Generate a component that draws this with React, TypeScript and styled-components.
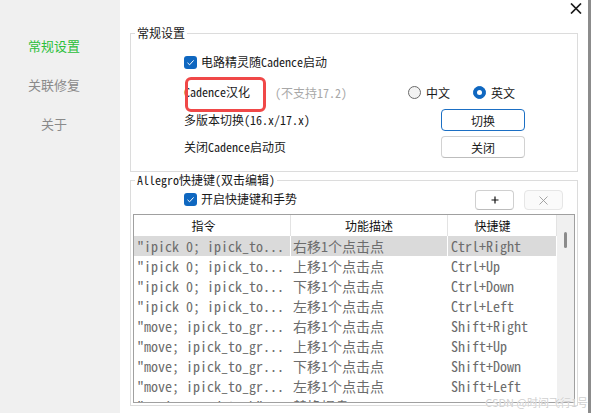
import React from 'react';
import styled, { createGlobalStyle } from 'styled-components';

const SIM = `"Noto Sans Mono CJK SC", "Liberation Mono", "Noto Sans CJK SC", monospace`;
const UI = `"Noto Sans CJK SC", "Noto Sans", sans-serif`;

const GlobalStyle = createGlobalStyle`
  html, body { margin: 0; padding: 0; background: #fff; }
  body { font-family: ${UI}; color: #1a1a1a; }
  * { box-sizing: border-box; }
`;

const Window = styled.div`
  position: relative;
  display: flex;
  width: 592px;
  height: 413px;
  overflow: hidden;
`;

const Sidebar = styled.nav`
  width: 120px;
  flex: none;
  background: #f0f0f0;
  padding: 26px 12px 0 0;
  display: flex;
  flex-direction: column;
`;

const NavItem = styled.div<{ $active?: boolean }>`
  height: 39px;
  line-height: 39px;
  text-align: center;
  font-size: 13px;
  color: ${(p) => (p.$active ? '#2bbf3a' : '#8a8a8a')};
`;

const Main = styled.main`
  flex: 1;
  display: flex;
  flex-direction: column;
  padding: 0 10px;
  border-right: 3px solid #8c8c8c;
  margin-right: 1px;
  background: #fff;
`;

const TitleBar = styled.div`
  height: 25px;
  display: flex;
  justify-content: flex-end;
  align-items: flex-start;
  padding-top: 3px;
  margin-right: -4px;
`;

const CloseButton = styled.div`
  width: 12px;
  height: 11px;
  display: flex;
`;

const Group = styled.fieldset`
  margin: 0;
  padding: 0;
  min-width: 0;
  border: 1px solid #dcdcdc;
`;

const Legend = styled.legend`
  margin-left: 4px;
  padding: 0 2px;
  font-family: ${SIM};
  font-size: 12px;
  line-height: 16px;
  color: #1a1a1a;
`;

const GeneralBody = styled.div`
  display: flex;
  flex-direction: column;
  padding: 10px 52px 13px 53px;
`;

const Row = styled.div<{ $mt?: number; $spread?: boolean }>`
  display: flex;
  align-items: center;
  height: 22px;
  margin-top: ${(p) => p.$mt ?? 0}px;
  justify-content: ${(p) => (p.$spread ? 'space-between' : 'flex-start')};
`;

const Label = styled.span<{ $ml?: number }>`
  font-family: ${SIM};
  font-size: 12px;
  line-height: 22px;
  white-space: nowrap;
  color: #1a1a1a;
  margin-left: ${(p) => p.$ml ?? 0}px;
`;

const MarkedLabel = styled(Label)`
  position: relative;
  display: block;
  width: 76px;
  &::after {
    content: '';
    position: absolute;
    left: 1px;
    top: -4px;
    width: 75px;
    height: 29px;
    border: 3px solid #f04848;
    border-radius: 6px;
  }
`;

const Note = styled.span`
  font-family: ${SIM};
  font-size: 12px;
  color: #a8a8a8;
  margin-left: 15px;
  width: 133px;
  white-space: nowrap;
`;

const RadioGroup = styled.div`
  display: flex;
  align-items: center;
  gap: 23px;
`;

const RadioItem = styled.label`
  display: flex;
  align-items: center;
  gap: 5px;
  font-size: 12px;
  color: #1a1a1a;
`;

const RadioCircle = styled.span<{ $on?: boolean }>`
  width: 13px;
  height: 13px;
  border-radius: 50%;
  display: flex;
  align-items: center;
  justify-content: center;
  background: ${(p) => (p.$on ? '#0f67c0' : '#f3f3f3')};
  border: 1px solid ${(p) => (p.$on ? '#0f67c0' : '#6a6a6a')};
  &::after {
    content: '';
    display: ${(p) => (p.$on ? 'block' : 'none')};
    width: 5px;
    height: 5px;
    border-radius: 50%;
    background: #fff;
  }
`;

const CheckBox = styled.span`
  width: 13px;
  height: 13px;
  border-radius: 3px;
  background: #0f67c0;
  display: flex;
  align-items: center;
  justify-content: center;
  flex: none;
`;

const Button = styled.button<{ $primary?: boolean }>`
  width: 84px;
  height: 22px;
  padding: 0;
  font-family: ${UI};
  font-size: 12px;
  color: #1a1a1a;
  background: #fff;
  border: 1px solid ${(p) => (p.$primary ? '#1b6fc4' : '#d2d2d2')};
  border-bottom-color: ${(p) => (p.$primary ? '#1b6fc4' : '#bdbdbd')};
  border-radius: 4px;
`;

const ShortcutBody = styled.div`
  display: flex;
  flex-direction: column;
  padding: 0 2px 2px 2px;
`;

const ToolRow = styled.div`
  display: flex;
  align-items: center;
  height: 22px;
  padding: 0 12px 0 51px;
`;

const ToolButtons = styled.div`
  margin-left: auto;
  display: flex;
  gap: 10px;
  padding-top: 2px;
`;

const SmallButton = styled.button<{ $disabled?: boolean }>`
  width: 39px;
  height: 20px;
  padding: 0;
  display: flex;
  align-items: center;
  justify-content: center;
  border-radius: 4px;
  background: ${(p) => (p.$disabled ? '#fafafa' : '#fff')};
  border: 1px solid ${(p) => (p.$disabled ? '#e6e6e6' : '#d0d0d0')};
  border-bottom-color: ${(p) => (p.$disabled ? '#e6e6e6' : '#bcbcbc')};
`;

const Table = styled.div`
  margin-top: 4px;
  height: 189px;
  border: 1px solid #a0a0a0;
  display: flex;
  overflow: hidden;
`;

const Grid = styled.div`
  flex: 1;
  display: grid;
  grid-template-columns: 157px 157px 109px;
  grid-template-rows: 21px;
  grid-auto-rows: 20px;
  align-content: start;
  overflow: hidden;
`;

const HeadCell = styled.div<{ $pr?: number }>`
  font-size: 12px;
  line-height: 21px;
  text-align: center;
  color: #111;
  border-right: 1px solid #e3e3e3;
  padding-right: ${(p) => p.$pr ?? 0}px;
`;

const Cell = styled.div<{ $sel?: boolean; $pl?: number }>`
  margin-right: 1px;
  padding-left: ${(p) => p.$pl ?? 3}px;
  font-family: ${SIM};
  font-size: 14px;
  line-height: 20px;
  color: #6c6c6c;
  white-space: nowrap;
  overflow: hidden;
  background: ${(p) => (p.$sel ? '#dadada' : 'transparent')};
`;

const ScrollTrack = styled.div`
  width: 17px;
  flex: none;
  background: #f0f0f0;
  display: flex;
  justify-content: center;
  padding-top: 17px;
`;

const Thumb = styled.div`
  width: 3px;
  height: 16px;
  border-radius: 2px;
  background: #8b8b8b;
`;

const Watermark = styled.div`
  position: absolute;
  right: 4px;
  bottom: 4px;
  font-size: 11px;
  line-height: 13px;
  color: rgba(205, 205, 205, 0.95);
  text-shadow: 0 0 1px #fff;
`;

const CheckIcon = () => (
  <svg width="9" height="9" viewBox="0 0 9 9">
    <path d="M1.5 4.8 L3.6 6.8 L7.6 2.4" fill="none" stroke="#fff" strokeWidth="1" />
  </svg>
);

const rows = [
  ['"ipick 0; ipick_to...', '右移1个点击点', 'Ctrl+Right'],
  ['"ipick 0; ipick_to...', '上移1个点击点', 'Ctrl+Up'],
  ['"ipick 0; ipick_to...', '下移1个点击点', 'Ctrl+Down'],
  ['"ipick 0; ipick_to...', '左移1个点击点', 'Ctrl+Left'],
  ['"move; ipick_to_gr...', '右移1个点击点', 'Shift+Right'],
  ['"move; ipick_to_gr...', '上移1个点击点', 'Shift+Up'],
  ['"move; ipick_to_gr...', '下移1个点击点', 'Shift+Down'],
  ['"move; ipick_to_gr...', '左移1个点击点', 'Shift+Left'],
  ['"replace padstack"', '替换焊盘', ''],
];

export default function App() {
  return (
    <>
      <GlobalStyle />
      <Window>
        <Sidebar>
          <NavItem $active>常规设置</NavItem>
          <NavItem>关联修复</NavItem>
          <NavItem>关于</NavItem>
        </Sidebar>
        <Main>
          <TitleBar>
            <CloseButton>
              <svg width="12" height="11" viewBox="0 0 12 11">
                <path d="M1 0.5 L11 10.5 M11 0.5 L1 10.5" stroke="#1a1a1a" strokeWidth="1.7" />
              </svg>
            </CloseButton>
          </TitleBar>
          <Group>
            <Legend>常规设置</Legend>
            <GeneralBody>
              <Row>
                <CheckBox>
                  <CheckIcon />
                </CheckBox>
                <Label $ml={4}>电路精灵随Cadence启动</Label>
              </Row>
              <Row $mt={8}>
                <MarkedLabel>Cadence汉化</MarkedLabel>
                <Note>(不支持17.2)</Note>
                <RadioGroup>
                  <RadioItem>
                    <RadioCircle />
                    中文
                  </RadioItem>
                  <RadioItem>
                    <RadioCircle $on />
                    英文
                  </RadioItem>
                </RadioGroup>
              </Row>
              <Row $mt={6} $spread>
                <Label>多版本切换(16.x/17.x)</Label>
                <Button $primary>切换</Button>
              </Row>
              <Row $mt={5} $spread>
                <Label>关闭Cadence启动页</Label>
                <Button>关闭</Button>
              </Row>
            </GeneralBody>
          </Group>
          <Group>
            <Legend>Allegro快捷键(双击编辑)</Legend>
            <ShortcutBody>
              <ToolRow>
                <CheckBox>
                  <CheckIcon />
                </CheckBox>
                <Label $ml={4}>开启快捷键和手势</Label>
                <ToolButtons>
                  <SmallButton>
                    <svg width="8" height="8" viewBox="0 0 8 8">
                      <path d="M4 0.5 V7.5 M0.5 4 H7.5" stroke="#111" strokeWidth="1.2" />
                    </svg>
                  </SmallButton>
                  <SmallButton $disabled>
                    <svg width="9" height="9" viewBox="0 0 9 9">
                      <path d="M0.5 0.5 L8.5 8.5 M8.5 0.5 L0.5 8.5" stroke="#9a9a9a" strokeWidth="0.9" />
                    </svg>
                  </SmallButton>
                </ToolButtons>
              </ToolRow>
              <Table>
                <Grid>
                  <HeadCell $pr={17}>指令</HeadCell>
                  <HeadCell>功能描述</HeadCell>
                  <HeadCell $pr={19}>快捷键</HeadCell>
                  {rows.map((r, i) => (
                    <React.Fragment key={i}>
                      <Cell $sel={i === 0} $pl={3}>{r[0]}</Cell>
                      <Cell $sel={i === 0} $pl={2}>{r[1]}</Cell>
                      <Cell $sel={i === 0} $pl={3}>{r[2]}</Cell>
                    </React.Fragment>
                  ))}
                </Grid>
                <ScrollTrack>
                  <Thumb />
                </ScrollTrack>
              </Table>
            </ShortcutBody>
          </Group>
        </Main>
        <Watermark>CSDN @时间飞行1号</Watermark>
      </Window>
    </>
  );
}
